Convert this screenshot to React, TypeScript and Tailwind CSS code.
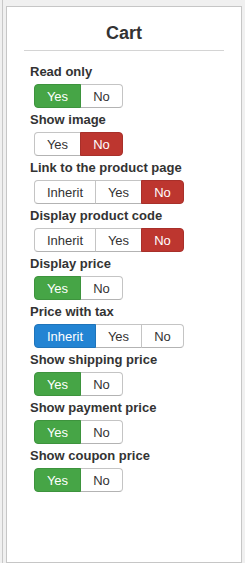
import React from "react";

type Group = {
  label: string;
  options: { text: string; w: string }[];
  sel: number;
  color: "green" | "red" | "blue";
};

const two = (sel: number, color: Group["color"], label: string): Group => ({
  label,
  options: [
    { text: "Yes", w: "w-[47px]" },
    { text: "No", w: "w-[43px]" },
  ],
  sel,
  color,
});

const three = (sel: number, color: Group["color"], label: string): Group => ({
  label,
  options: [
    { text: "Inherit", w: "w-[62px]" },
    { text: "Yes", w: "w-[47px]" },
    { text: "No", w: "w-[43px]" },
  ],
  sel,
  color,
});

const groups: Group[] = [
  two(0, "green", "Read only"),
  two(1, "red", "Show image"),
  three(2, "red", "Link to the product page"),
  three(2, "red", "Display product code"),
  two(0, "green", "Display price"),
  three(0, "blue", "Price with tax"),
  two(0, "green", "Show shipping price"),
  two(0, "green", "Show payment price"),
  two(0, "green", "Show coupon price"),
];

const selClass: Record<Group["color"], string> = {
  green: "bg-[#46a546] border-[#3d933d] text-white z-10",
  red: "bg-[#bd362f] border-[#a8302a] text-white z-10",
  blue: "bg-[#2384d3] border-[#1f74ba] text-white z-10",
};

function ButtonGroup({ g }: { g: Group }) {
  const n = g.options.length;
  return (
    <div className="flex ml-[10px] mt-[3px] mb-[3px] h-[24px]">
      {g.options.map((o, i) => {
        const selected = i === g.sel;
        const first = i === 0;
        const last = i === n - 1;
        return (
          <div
            key={i}
            className={[
              "relative flex items-center justify-center h-[24px] border text-[13px] leading-[18px]",
              o.w,
              first ? "rounded-l-[4px]" : "-ml-px",
              last ? "rounded-r-[4px]" : "",
              selected
                ? selClass[g.color]
                : "bg-white border-[#c4c4c4] border-b-[#b3b3b3] text-[#333]",
            ].join(" ")}
          >
            <span className="pt-px">{o.text}</span>
          </div>
        );
      })}
    </div>
  );
}

export default function App() {
  return (
    <div
      className="w-[245px] h-[563px] bg-[#f0f0f0] flex overflow-hidden"
      style={{ fontFamily: '"Liberation Sans", Arial, sans-serif' }}
    >
      <div className="w-[3px] h-[563px] border-r border-[#c8c8c8] shrink-0" />
      <div className="w-[3px] shrink-0" />
      <div className="mt-[6px] w-[236px] h-[557px] shrink-0 bg-white border border-[#c6c6c6] px-[17px] pt-[15px]">
        <div className="h-[22px] text-center text-[18px] leading-[22px] font-bold text-[#333]">
          Cart
        </div>
        <div className="mt-[6px] border-t border-[#d4d4d4]" />
        <div className="mt-[12px] flex flex-col">
          {groups.map((g, i) => (
            <div key={i} className="flex flex-col">
              <div className="pl-[6px] h-[18px] text-[13px] leading-[18px] font-bold text-[#333] whitespace-nowrap">
                {g.label}
              </div>
              <ButtonGroup g={g} />
            </div>
          ))}
        </div>
      </div>
    </div>
  );
}
